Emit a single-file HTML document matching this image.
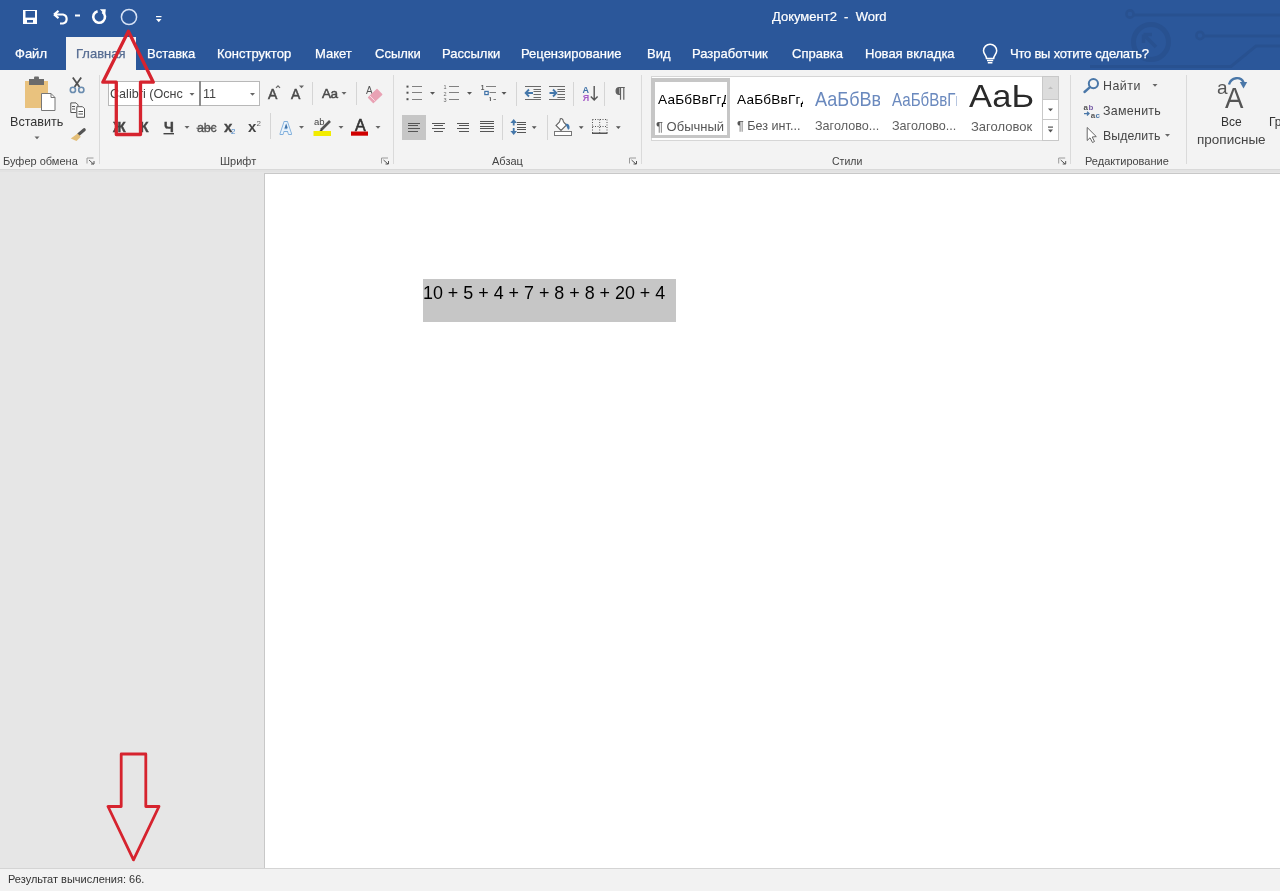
<!DOCTYPE html>
<html><head><meta charset="utf-8">
<style>
*{margin:0;padding:0;box-sizing:border-box}
html,body{width:1280px;height:891px;overflow:hidden;background:#E6E6E6;font-family:"Liberation Sans",sans-serif;position:relative}
.a{position:absolute}
.t{position:absolute;white-space:pre;line-height:1}
#title{left:0;top:0;width:1280px;height:70px;background:#2B579A}
.tab{position:absolute;top:47px;font-size:13px;color:#fff;white-space:pre;line-height:1;-webkit-text-stroke:0.25px currentColor}
#ribbon{left:0;top:70px;width:1280px;height:99px;background:#F3F3F3}
.glab{position:absolute;top:156px;font-size:11.5px;color:#444;white-space:pre;line-height:1}
.sep{position:absolute;width:1px;background:#D5D5D5}
.dd{position:absolute;width:0;height:0;border-left:3px solid transparent;border-right:3px solid transparent;border-top:3px solid #666}
</style></head>
<body>
<div id="root" style="position:absolute;left:0;top:0;width:1280px;height:891px;will-change:transform">
<!-- title bar -->
<div id="title" class="a">
 <svg class="a" style="left:0;top:0" width="1280" height="70">
  <g fill="none" stroke="#28508F" stroke-width="3.2" opacity="0.85">
   <circle cx="1130" cy="14" r="3.6" stroke-width="2.6"/>
   <line x1="1134" y1="15" x2="1280" y2="15"/>
   <circle cx="1151" cy="42" r="17.5" stroke-width="5"/>
   <path d="M1143.5 34.5 L1156 47 M1143.5 34.5 L1143.5 43 M1143.5 34.5 L1152 34.5" stroke-width="3.6"/>
   <circle cx="1200" cy="35.5" r="3.6" stroke-width="2.6"/>
   <line x1="1204" y1="36" x2="1280" y2="36"/>
   <path d="M1090 66.5 L1231 66.5 L1256 46 L1280 46" stroke-width="3"/>
  </g>
 </svg>
 <!-- QAT -->
 <svg class="a" style="left:0;top:0" width="170" height="34">
  <rect x="23" y="10" width="14" height="14" fill="#fff"/>
  <rect x="25.5" y="11" width="9.5" height="6.6" fill="#2B579A"/>
  <rect x="27" y="20" width="6" height="2.6" fill="#2B579A"/>
  <path d="M54 14.5 L58.5 10.8 M54 14.5 L58.5 18.2 M54.5 14.5 H63 A4.6 4.6 0 0 1 63 23.5 H60" fill="none" stroke="#fff" stroke-width="2.2"/>
  <rect x="75" y="14.5" width="5" height="2" fill="#fff"/>
  <path d="M97.6 11.2 A5.9 5.9 0 1 0 102.4 12" fill="none" stroke="#fff" stroke-width="2.6"/>
  <path d="M99.8 9.2 L105.8 9.2 L105.2 14.8 Z" fill="#fff"/>
  <circle cx="129" cy="17" r="7.6" fill="none" stroke="#D6E2F5" stroke-width="1.5"/>
  <rect x="156" y="16" width="5.5" height="1.2" fill="#fff"/>
  <path d="M156 19 L161.5 19 L158.75 22.3 Z" fill="#fff"/>
 </svg>
 <div class="t" style="left:772px;top:10px;font-size:13px;color:#fff;-webkit-text-stroke:0.2px #fff">Документ2  -  Word</div>
 <!-- tabs -->
 <div class="a" style="left:66px;top:37px;width:70px;height:33px;background:#F3F3F3"></div>
 <div class="tab" style="left:15px">Файл</div>
 <div class="tab" style="left:76px;color:#566C92">Главная</div>
 <div class="tab" style="left:147px">Вставка</div>
 <div class="tab" style="left:217px">Конструктор</div>
 <div class="tab" style="left:315px">Макет</div>
 <div class="tab" style="left:375px">Ссылки</div>
 <div class="tab" style="left:442px">Рассылки</div>
 <div class="tab" style="left:521px">Рецензирование</div>
 <div class="tab" style="left:647px">Вид</div>
 <div class="tab" style="left:692px">Разработчик</div>
 <div class="tab" style="left:792px">Справка</div>
 <div class="tab" style="left:865px">Новая вкладка</div>
 <svg class="a" style="left:980px;top:42px" width="22" height="24">
  <path d="M6.5 15.5 C6.5 12.5 3.5 11 3.5 7.8 A6.6 6.6 0 0 1 16.7 7.8 C16.7 11 13.7 12.5 13.7 15.5 Z" fill="none" stroke="#fff" stroke-width="1.5" transform="translate(0,1)"/>
  <path d="M7 18.5 H13.2 M7.8 20.8 H12.4" stroke="#fff" stroke-width="1.4"/>
 </svg>
 <div class="tab" style="left:1010px;letter-spacing:-0.22px">Что вы хотите сделать?</div>
</div>

<!-- ribbon -->
<div id="ribbon" class="a"></div>
<div class="a" style="left:0;top:169px;width:1280px;height:1px;background:#D9D9D9"></div><div class="a" style="left:0;top:170px;width:1280px;height:2px;background:#E2E2E2"></div>

<!-- document area -->
<div class="a" style="left:264px;top:173px;width:1016px;height:695px;background:#C8C8C8"></div>
<div class="a" style="left:265px;top:174px;width:1015px;height:694px;background:#fff"></div>
<div class="a" style="left:423px;top:279px;width:253px;height:43px;background:#C6C6C6"></div>
<div class="t" style="left:423px;top:285px;font-size:17.9px;color:#000">10 + 5 + 4 + 7 + 8 + 8 + 20 + 4</div>

<!-- status bar -->
<div class="a" style="left:0;top:868px;width:1280px;height:1px;background:#D4D4D4"></div>
<div class="a" style="left:0;top:869px;width:1280px;height:22px;background:#F2F2F2"></div>
<div class="t" style="left:8px;top:874px;font-size:11px;color:#333">Результат вычисления: 66.</div>

<!-- RIBBON CONTENT -->
<!-- clipboard group -->
<svg class="a" style="left:0;top:0" width="1280" height="172">
 <rect x="25" y="81" width="23" height="27" fill="#E9C27E"/>
 <rect x="29" y="79" width="15" height="6" fill="#6B6B6B"/>
 <rect x="34" y="76.5" width="5" height="3" rx="1" fill="#6B6B6B"/>
 <path d="M41.5 93.5 H51 L55 97.5 V110.5 H41.5 Z" fill="#fff" stroke="#777" stroke-width="1"/>
 <path d="M51 93.5 V97.5 H55" fill="none" stroke="#777" stroke-width="1"/>
 <path d="M34.5 136.5 L39.5 136.5 L37 139.2 Z" fill="#666"/>
 <!-- scissors -->
 <path d="M72.8 77.5 L79.5 87 M81.2 77.5 L74.5 87" stroke="#505050" stroke-width="1.8" fill="none"/>
 <circle cx="72.9" cy="89.9" r="2.6" fill="none" stroke="#6A8CAF" stroke-width="1.6"/>
 <circle cx="81.3" cy="89.9" r="2.6" fill="none" stroke="#6A8CAF" stroke-width="1.6"/>
 <!-- copy -->
 <path d="M70.8 102.9 H76 L78 104.9 V106 M70.8 102.9 V112.5 H76" fill="#fff" stroke="#555" stroke-width="1"/>
 <path d="M76.8 106.7 H82.5 L84.5 108.7 V117.3 H76.8 Z" fill="#fff" stroke="#555" stroke-width="1"/>
 <path d="M72 106.5 H75 M72 109 H75 M78.5 111.5 H83 M78.5 114 H83" stroke="#555" stroke-width="1"/>
 <!-- brush -->
 <path d="M84.2 129.8 L78.6 134.4" stroke="#555" stroke-width="3.2" stroke-linecap="round"/>
 <path d="M77.6 133.5 L80.8 136.7 L76.5 141 L70.8 138.6 Z" fill="#E3BE78"/>
 <rect x="99" y="75" width="1" height="89" fill="#DADADA"/>
 <path d="M87.0 163.5 V158.0 H93.5" fill="none" stroke="#9A9A9A" stroke-width="1"/>
 <path d="M89.0 160.0 L93.5 164.0 M94.0 161.0 V164.0 H91.0" fill="none" stroke="#555" stroke-width="1"/>
</svg>
<div class="t" style="left:10px;top:115.5px;font-size:12.6px;color:#333">Вставить</div>
<div class="glab" style="left:3px;font-size:11px">Буфер обмена</div>



<!-- font group -->
<div class="a" style="left:108px;top:81px;width:92px;height:25px;background:#fff;border:1px solid #B8B8B8"></div>
<div class="a" style="left:199px;top:81px;width:61px;height:25px;background:#fff;border:1px solid #B8B8B8"></div>
<div class="a" style="left:199px;top:81px;width:2px;height:25px;background:#8C8C8C"></div>
<div class="t" style="left:110px;top:88px;font-size:12.6px;color:#444">Calibri (Оснс</div>
<div class="t" style="left:203px;top:88px;font-size:12.6px;color:#444">11</div>
<div class="t" style="left:113px;top:120px;font-size:14px;font-weight:bold;color:#444;-webkit-text-stroke:0.4px #444">Ж</div>
<div class="t" style="left:140px;top:120px;font-size:14px;font-weight:bold;color:#444;-webkit-text-stroke:0.4px #444">К</div>
<div class="t" style="left:164px;top:120px;font-size:14px;font-weight:bold;color:#444;-webkit-text-stroke:0.4px #444">Ч</div>
<div class="t" style="left:197px;top:122px;font-size:12.5px;color:#555;letter-spacing:-0.2px;-webkit-text-stroke:0.3px #555">abc</div>
<div class="t" style="left:224px;top:119px;font-size:15px;font-weight:bold;color:#444;-webkit-text-stroke:0.3px #444">x</div>
<div class="t" style="left:248px;top:119px;font-size:15px;font-weight:bold;color:#444">x</div>
<div class="t" style="left:268px;top:87px;font-size:14px;color:#4A4A4A;-webkit-text-stroke:0.5px #4A4A4A">A</div>
<div class="t" style="left:291px;top:87px;font-size:14px;color:#4A4A4A;-webkit-text-stroke:0.5px #4A4A4A">A</div>
<div class="t" style="left:322px;top:87px;font-size:13.5px;color:#4A4A4A;letter-spacing:-0.5px;-webkit-text-stroke:0.5px #4A4A4A">Aa</div>
<div class="t" style="left:355px;top:118px;font-size:16px;color:#333;-webkit-text-stroke:0.6px #333">A</div>
<div class="glab" style="left:220px;font-size:11px">Шрифт</div>
<svg class="a" style="left:0;top:0" width="400" height="172">
 <path d="M189.5 93 L194.5 93 L192 95.7 Z" fill="#666"/>
 <path d="M250 93 L255 93 L252.5 95.7 Z" fill="#666"/>
 <rect x="163.5" y="133" width="10.5" height="1.4" fill="#444"/>
 <path d="M184.5 126 L189.5 126 L187 128.7 Z" fill="#666"/>
 <rect x="196.5" y="127.6" width="19" height="1.2" fill="#555"/>
 <text x="231" y="134" font-family="Liberation Sans" font-size="8" fill="#4A86C8">2</text>
 <text x="256.5" y="126" font-family="Liberation Sans" font-size="8" fill="#666">2</text>
 <path d="M276 87.8 L278 85.8 L280 87.8" fill="none" stroke="#666" stroke-width="1.2"/>
 <path d="M299 85.6 L304 85.6 L301.5 88.3 Z" fill="#666"/>
 <rect x="312" y="82" width="1" height="23" fill="#D5D5D5"/>
 <path d="M341.5 92 L346.5 92 L344 94.7 Z" fill="#666"/>
 <rect x="356" y="82" width="1" height="23" fill="#D5D5D5"/>
 <text x="366" y="94" font-family="Liberation Sans" font-size="10" fill="#555">A</text>
 <path d="M368.5 97.5 L377 89.5 L381.8 94.5 L373.3 102.5 Z" fill="#E9A2B4" stroke="#E9A2B4" stroke-width="1.2" stroke-linejoin="round"/>
 <path d="M369.8 95.8 L374.8 100.8" stroke="#F8DCE3" stroke-width="1"/>
 <rect x="270" y="113" width="1" height="26" fill="#D5D5D5"/>
 <text x="280" y="133.5" font-family="Liberation Sans" font-size="16" font-weight="bold" fill="#EAF3FB" stroke="#7FAEDB" stroke-width="1.8" paint-order="stroke" stroke-linejoin="round">A</text>
 <path d="M284.6 128.2 L286.2 123.5 L287.8 128.2 Z" fill="#3F72A8"/>
 <path d="M299 126 L304 126 L301.5 128.7 Z" fill="#666"/>
 <text x="314" y="125" font-family="Liberation Sans" font-size="9.5" fill="#444">ab</text>
 <path d="M330 121 L321 130" stroke="#555" stroke-width="2.6"/>
 <path d="M319 131.5 L321.5 128.8 L322.5 131.5 Z" fill="#444"/>
 <rect x="313.5" y="131" width="17.5" height="5" fill="#F2EC00"/>
 <path d="M338.5 126 L343.5 126 L341 128.7 Z" fill="#666"/>
 <rect x="351" y="131.5" width="17" height="4.2" fill="#D00000"/>
 <path d="M375.5 126 L380.5 126 L378 128.7 Z" fill="#666"/>
 <path d="M381.5 163.5 V158.0 H388" fill="none" stroke="#9A9A9A" stroke-width="1"/>
 <path d="M383.5 160.0 L388 164.0 M388.5 161.0 V164.0 H385.5" fill="none" stroke="#555" stroke-width="1"/>
 <rect x="393" y="75" width="1" height="89" fill="#DADADA"/>
</svg>


<!-- paragraph group -->
<svg class="a" style="left:0;top:0" width="660" height="172">
 <g fill="#505050">
  <rect x="406.5" y="85.6" width="2" height="2"/><rect x="406.5" y="91.7" width="2" height="2"/><rect x="406.5" y="98.2" width="2" height="2"/>
 </g>
 <g stroke="#808080" stroke-width="1">
  <path d="M412 86.5 H422 M412 92.5 H422 M412 99.5 H422"/>
  <path d="M449 86.5 H459 M449 92.5 H459 M449 99.5 H459"/>
  <path d="M486 86.5 H496 M489.5 92.5 H496 M493.5 99.5 H496"/>
 </g>
 <g fill="#555">
  <path d="M430 92 L435 92 L432.5 94.8 Z"/>
  <path d="M467 92 L472 92 L469.5 94.8 Z"/>
  <path d="M501.5 92 L506.5 92 L504 94.8 Z"/>
 </g>
 <text x="443.5" y="89" font-family="Liberation Sans" font-size="5.5" fill="#666">1</text>
 <text x="443.5" y="95.5" font-family="Liberation Sans" font-size="5.5" fill="#666">2</text>
 <text x="443.5" y="102" font-family="Liberation Sans" font-size="5.5" fill="#666">3</text>
 <text x="480.8" y="90" font-family="Liberation Sans" font-size="6.5" font-weight="bold" fill="#555">1</text>
 <rect x="484.8" y="91.4" width="3.4" height="3.2" fill="none" stroke="#3F72A8" stroke-width="1.2"/>
 <path d="M490.4 97.5 V101 M489.6 97.5 H490.5" stroke="#555" stroke-width="1"/>
 <rect x="516" y="82" width="1" height="24" fill="#D5D5D5"/>
 <!-- indents -->
 <g stroke="#6A6A6A" stroke-width="1">
  <path d="M525 86.5 H541 M525 99.5 H541 M533.5 89.5 H541 M533.5 91.5 H541 M533.5 94.5 H541 M533.5 97.5 H541"/>
  <path d="M549 86.5 H565 M549 99.5 H565 M557.4 89.5 H565 M557.4 91.5 H565 M557.4 94.5 H565 M557.4 97.5 H565"/>
 </g>
 <g fill="none" stroke="#4477AA" stroke-width="1.8">
  <path d="M526 93 H533 M529 89.5 L525.6 93 L529 96.5"/>
  <path d="M549.5 93 H556.5 M553 89.5 L556.4 93 L553 96.5"/>
 </g>
 <rect x="573" y="82" width="1" height="24" fill="#D5D5D5"/>
 <text x="582.5" y="92.6" font-family="Liberation Sans" font-size="9" font-weight="bold" fill="#3F72A8">A</text>
 <text x="582.8" y="100.8" font-family="Liberation Sans" font-size="9" font-weight="bold" fill="#A55BC8">Я</text>
 <path d="M594.2 86 V100 M590.8 96.5 L594.2 100 L597.6 96.5" fill="none" stroke="#555" stroke-width="1.4"/>
 <rect x="604" y="82" width="1" height="24" fill="#D5D5D5"/>
 <path d="M620.5 87.5 V99.8 M623.8 87.5 V99.8 M624.8 87.5 H619.5 A3.4 3.4 0 0 0 619.5 94.3 H620.5" fill="none" stroke="#606060" stroke-width="1.2"/>
 <path d="M619.5 87.5 A3.4 3.4 0 0 0 619.5 94.3 Z" fill="#606060"/>
 <!-- align row -->
 <rect x="402" y="115" width="24" height="25" fill="#C6C6C6"/>
 <g stroke="#555" stroke-width="1.1">
  <path d="M408 123.5 H420 M408 125.5 H418 M408 128.5 H420 M408 131.5 H418"/>
  <path d="M432 123.5 H445 M434 125.5 H443 M432 128.5 H445 M434 131.5 H443"/>
  <path d="M457 123.5 H469 M459 125.5 H469 M457 128.5 H469 M459 131.5 H469"/>
  <path d="M480 121.5 H494 M480 123.5 H494 M480 126.5 H494 M480 128.5 H494 M480 131.5 H494"/>
  <path d="M517 122.5 H526 M517 124.5 H526 M517 127.5 H526 M517 129.5 H526 M517 132.5 H526"/>
 </g>
 <rect x="502" y="115" width="1" height="25" fill="#D5D5D5"/>
 <g fill="#4477AA">
  <path d="M513.7 119 L517 123 L510.4 123 Z"/><rect x="512.8" y="122" width="1.8" height="3.5"/>
  <path d="M513.7 135 L517 131 L510.4 131 Z"/><rect x="512.8" y="128" width="1.8" height="3.5"/>
 </g>
 <path d="M531.8 126.3 L536.6 126.3 L534.2 129 Z" fill="#555"/>
 <rect x="547" y="115" width="1" height="25" fill="#D5D5D5"/>
 <!-- shading -->
 <rect x="554.5" y="131.5" width="17" height="4" fill="#fff" stroke="#777" stroke-width="1"/>
 <path d="M560.5 118.5 L559.5 122 L556 125.5 L561 130.5 L566.5 125 L563.5 122 M560 119 C561 118 563 118.5 563.5 122" fill="#fff" stroke="#666" stroke-width="1.1"/>
 <path d="M565.5 124 C568 123 570 125 569.5 128.5 C569 130 567.5 130 567.5 128.5 Z" fill="#4477AA"/>
 <path d="M578.8 126.3 L583.6 126.3 L581.2 129 Z" fill="#555"/>
 <!-- borders -->
 <g stroke="#555" stroke-width="1" stroke-dasharray="1 1.5" fill="none">
  <path d="M592.5 119.5 H607 M592.5 126.5 H607 M592.5 119.5 V133 M599.7 119.5 V133 M607 119.5 V133"/>
 </g>
 <rect x="592" y="132.5" width="15.5" height="1.5" fill="#555"/>
 <path d="M615.9 126.3 L620.7 126.3 L618.3 129 Z" fill="#555"/>
 <path d="M629.5 163.5 V158.0 H636" fill="none" stroke="#9A9A9A" stroke-width="1"/>
 <path d="M631.5 160.0 L636 164.0 M636.5 161.0 V164.0 H633.5" fill="none" stroke="#555" stroke-width="1"/>
 <rect x="641" y="75" width="1" height="89" fill="#DADADA"/>
</svg>
<div class="glab" style="left:492px;font-size:11px">Абзац</div>


<!-- styles group -->
<div class="a" style="left:651px;top:76px;width:408px;height:65px;background:#fff;border:1px solid #D6D6D6"></div>
<div class="a" style="left:651px;top:78px;width:79px;height:60px;border:4px solid #C6C6C6;border-bottom-width:3.5px;border-right-width:3.5px"></div>
<div class="a" style="left:1042px;top:76px;width:17px;height:65px;border:1px solid #C8C8C8;background:#fff"></div>
<div class="a" style="left:1043px;top:77px;width:15px;height:23px;background:#DCDCDC"></div>
<div class="a" style="left:1042px;top:99px;width:17px;height:1px;background:#C8C8C8"></div>
<div class="a" style="left:1042px;top:119px;width:17px;height:1px;background:#C8C8C8"></div>
<div class="a" style="left:655px;top:89px;width:71px;height:20px;overflow:hidden"><div class="t" style="left:3px;top:4px;font-size:13.6px;color:#000;letter-spacing:0.2px">АаБбВвГгДд</div></div>
<div class="a" style="left:735px;top:89px;width:68px;height:20px;overflow:hidden"><div class="t" style="left:2px;top:4px;font-size:13.6px;color:#000;letter-spacing:0.2px">АаБбВвГгДд</div></div>
<div class="a" style="left:814px;top:86px;width:66px;height:26px;overflow:hidden"><div class="t" style="left:1px;top:2px;font-size:21px;color:#6A89BE;transform:scale(0.86,1);transform-origin:0 0">АаБбВв</div></div>
<div class="a" style="left:891px;top:88px;width:66px;height:24px;overflow:hidden"><div class="t" style="left:1px;top:3px;font-size:18px;color:#6A89BE;transform:scale(0.84,1);transform-origin:0 0">АаБбВвГг</div></div>
<div class="t" style="left:969px;top:81px;font-size:30.5px;color:#2A2A2A;transform:scale(1.13,1);transform-origin:0 0">АаЬ</div>
<div class="t" style="left:656px;top:120px;font-size:13px;color:#555">¶ Обычный</div>
<div class="t" style="left:737px;top:120px;font-size:12.6px;color:#555">¶ Без инт...</div>
<div class="t" style="left:815px;top:120px;font-size:12.6px;color:#5E5E5E">Заголово...</div>
<div class="t" style="left:892px;top:120px;font-size:12.6px;color:#5E5E5E">Заголово...</div>
<div class="t" style="left:971px;top:120px;font-size:13px;color:#5E5E5E">Заголовок</div>
<div class="glab" style="left:832px;font-size:10.5px">Стили</div>
<svg class="a" style="left:1040px;top:70px" width="40" height="100">
 <path d="M8 19 L10.5 16.5 L13 19 Z" fill="#BDBDBD"/>
 <path d="M8 38.5 L13 38.5 L10.5 41.2 Z" fill="#555"/>
 <rect x="8" y="56.5" width="5" height="1.2" fill="#555"/>
 <path d="M8 59.5 L13 59.5 L10.5 62.5 Z" fill="#555"/>
 <path d="M18.7 93.5 V88.0 H25.2" fill="none" stroke="#9A9A9A" stroke-width="1"/>
 <path d="M20.7 90.0 L25.2 94.0 M25.7 91.0 V94.0 H22.7" fill="none" stroke="#555" stroke-width="1"/>
 <rect x="30" y="5" width="1" height="89" fill="#DADADA"/>
</svg>

<!-- editing group -->
<svg class="a" style="left:1078px;top:70px" width="202" height="100">
 <circle cx="15.4" cy="13.6" r="4.6" fill="none" stroke="#4A77A8" stroke-width="2"/>
 <path d="M12 17.2 L6.5 22" stroke="#4A77A8" stroke-width="2.4" stroke-linecap="round"/>
 <path d="M74.5 14 L79.5 14 L77 16.7 Z" fill="#666"/>
 <text x="5.5" y="39.5" font-family="Liberation Sans" font-size="8" font-weight="bold" fill="#555">a</text>
 <text x="10.5" y="39.5" font-family="Liberation Sans" font-size="8" font-weight="bold" fill="#7A5FA8">b</text>
 <path d="M6 43.6 H11 M9 41.8 L11 43.6 L9 45.4" fill="none" stroke="#4A77A8" stroke-width="1.3"/>
 <text x="12.8" y="47.5" font-family="Liberation Sans" font-size="8" font-weight="bold" fill="#555">a</text>
 <text x="17.5" y="47.5" font-family="Liberation Sans" font-size="8" font-weight="bold" fill="#4A77A8">c</text>
 <path d="M9.2 57.5 V70.5 L12 67.8 L14.5 72.5 L16.5 71.5 L14.2 67 L18.3 66.6 Z" fill="#fff" stroke="#666" stroke-width="1" stroke-linejoin="round"/>
 <path d="M87 64 L92 64 L89.5 66.7 Z" fill="#666"/>
 <path d="M7 88 V93.5 H12.5" fill="none" stroke="#fff" stroke-width="0"/>
 <rect x="108" y="5" width="1" height="89" fill="#DADADA"/>
 <path d="M151 14.5 C153 7 163 6 165.5 12.5" fill="none" stroke="#4A77A8" stroke-width="2.4"/>
 <path d="M161.8 12 L169.2 12 L165.5 18.5 Z" fill="#4A77A8"/>
</svg>
<div class="t" style="left:1103px;top:80px;font-size:12.4px;color:#444;letter-spacing:0.5px">Найти</div>
<div class="t" style="left:1103px;top:104.5px;font-size:12.4px;color:#444;letter-spacing:0.3px">Заменить</div>
<div class="t" style="left:1103px;top:130px;font-size:12.3px;color:#444;letter-spacing:0.1px">Выделить</div>
<div class="glab" style="left:1085px;font-size:11px">Редактирование</div>
<div class="t" style="left:1217px;top:78px;font-size:19px;color:#555">a</div>
<div class="t" style="left:1224.5px;top:82.5px;font-size:30px;color:#555;transform:scale(0.92,1);transform-origin:0 0">A</div>
<div class="t" style="left:1221px;top:116px;font-size:12px;color:#333">Все</div>
<div class="t" style="left:1197px;top:133px;font-size:13.5px;color:#444">прописные</div>
<div class="t" style="left:1269px;top:116px;font-size:12px;color:#333">Гр</div>

<!-- red arrows -->
<svg class="a" style="left:0;top:0" width="1280" height="891">
 <path d="M128.4 31.2 L153.3 82.2 L140.5 82.2 L140.5 134.5 L116.3 134.5 L116.3 82.2 L102.8 82.2 Z" fill="none" stroke="#D6232E" stroke-width="3.3" stroke-linejoin="round"/>
 <path d="M121.2 754 L145.8 754 L145.8 806.5 L159 806.5 L133.5 859.8 L108 806.5 L121.2 806.5 Z" fill="none" stroke="#D6232E" stroke-width="2.8" stroke-linejoin="round"/>
</svg>
</div>
</body></html>
